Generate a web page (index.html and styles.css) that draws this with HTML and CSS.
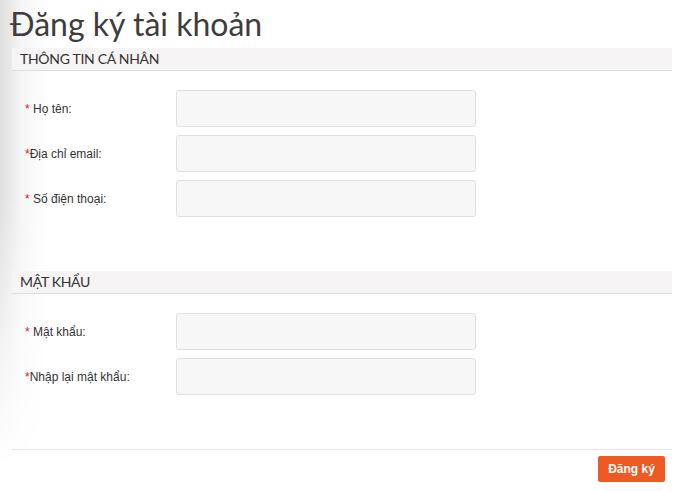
FILE: index.html
```html
<!DOCTYPE html>
<html lang="vi">
<head>
<meta charset="utf-8">
<title>Đăng ký tài khoản</title>
<link rel="stylesheet" href="styles.css">
</head>
<body>
<div class="shade"></div>
<div class="page">
  <h1 class="title">Đăng ký tài khoản</h1>
  <section class="section">
    <h2 class="section-head">THÔNG TIN CÁ NHÂN</h2>
    <div class="fields">
      <div class="row"><label class="label"><span class="req">*</span> Họ tên:</label><div class="input"></div></div>
      <div class="row"><label class="label"><span class="req">*</span>Địa chỉ email:</label><div class="input"></div></div>
      <div class="row"><label class="label"><span class="req">*</span> Số điện thoại:</label><div class="input"></div></div>
    </div>
  </section>
  <section class="section section-2">
    <h2 class="section-head">MẬT KHẨU</h2>
    <div class="fields">
      <div class="row"><label class="label"><span class="req">*</span> Mật khẩu:</label><div class="input"></div></div>
      <div class="row"><label class="label"><span class="req">*</span>Nhập lại mật khẩu:</label><div class="input"></div></div>
    </div>
  </section>
  <div class="actions">
    <button class="btn">Đăng ký</button>
  </div>
</div>
</body>
</html>
```

FILE: styles.css
```css
* { box-sizing: border-box; }
html, body { margin: 0; padding: 0; background: #fff; }
body { width: 681px; height: 491px; overflow: hidden; position: relative; }
.shade {
  position: absolute;
  left: 0; top: 0;
  width: 48px; height: 491px;
  background: linear-gradient(to right, rgba(0,0,0,0.13), rgba(0,0,0,0.04) 45%, rgba(0,0,0,0) 100%);
  -webkit-mask-image: linear-gradient(to bottom, #000 0%, #000 40%, rgba(0,0,0,0.3) 75%, transparent 95%);
  mask-image: linear-gradient(to bottom, #000 0%, #000 40%, rgba(0,0,0,0.3) 75%, transparent 95%);
  pointer-events: none;
}
.page {
  position: relative;
  margin-left: 12px;
  width: 660px;
}
.title {
  margin: 0;
  margin-left: -2px;
  font-family: Lato, sans-serif;
  font-weight: normal;
  font-size: 32px;
  line-height: 48px;
  color: #3d3d3d;
  height: 48px;
}
.section-head {
  margin: 0;
  height: 23px;
  padding-left: 8px;
  background: #f6f4f4;
  border-bottom: 1px solid #dddddd;
  font-family: Lato, sans-serif;
  font-weight: normal;
  font-size: 14px;
  letter-spacing: -0.3px;
  line-height: 22px;
  color: #333;
}
.fields {
  padding-top: 19px;
  display: flex;
  flex-direction: column;
  gap: 8px;
}
.row {
  display: flex;
  align-items: center;
  height: 37px;
}
.label {
  width: 164px;
  padding-left: 13px;
  font-family: "Liberation Sans", Arial, sans-serif;
  font-size: 12px;
  color: #333;
}
.req { color: #e8141b; }
.input {
  width: 300px;
  height: 37px;
  background: #f7f7f7;
  border: 1px solid #e0e0e0;
  border-radius: 3px;
}
.section-2 { margin-top: 54px; }
.actions {
  margin-top: 54px;
  border-top: 1px solid #e6e6e6;
  padding-top: 6px;
  display: flex;
  justify-content: flex-end;
  padding-right: 7px;
}
.btn {
  width: 67px;
  height: 26px;
  border: none;
  border-radius: 2px;
  background: #ee5a24;
  color: #fff;
  font-family: "Liberation Sans", Arial, sans-serif;
  font-weight: bold;
  font-size: 12px;
  padding: 0;
}
```
